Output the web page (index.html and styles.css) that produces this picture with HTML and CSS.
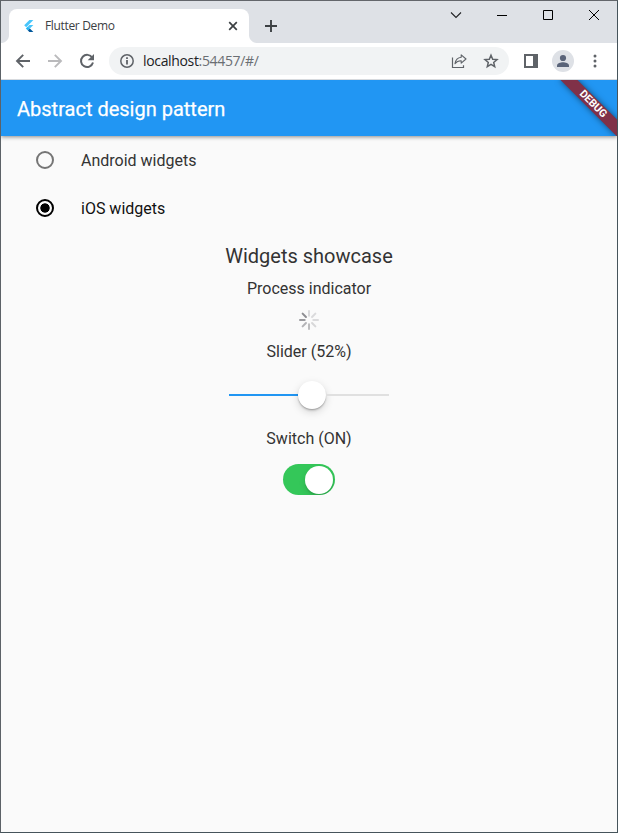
FILE: index.html
```html
<!DOCTYPE html>
<html lang="en">
<head>
<meta charset="utf-8">
<title>Flutter Demo</title>
<link rel="stylesheet" href="styles.css">
</head>
<body>
<div class="window">
  <header class="tabstrip">
    <div class="tab">
      <svg class="favicon" width="16" height="16" viewBox="0 0 16 16"><path d="M8.400 2h4L5.200 9.200l-2-2z" fill="#47c5fb"/><path d="M8.400 7h4l-3.500 3.500-2-2z" fill="#47c5fb"/><path d="M4.900 10.500l2-2 2 2-2 2z" fill="#22b6f6"/><path d="M6.900 12.500l2-2 3.500 3.500h-4z" fill="#01579b"/></svg>
      <span class="tab-title">Flutter Demo</span>
      <svg class="tab-close" width="10" height="10" viewBox="0 0 10 10"><path d="M1.2 1.2l7.6 7.6M8.8 1.2L1.2 8.8" stroke="#3c4043" stroke-width="1.7"/></svg>
    </div>
    <svg class="new-tab" width="12" height="12" viewBox="0 0 12 12"><path d="M6 0v12M0 6h12" stroke="#3c4043" stroke-width="1.9"/></svg>
    <div class="caption">
      <svg width="46" height="28" viewBox="0 0 46 28"><path d="M18 11.500l5 5 5-5" fill="none" stroke="#202124" stroke-width="1.1"/></svg>
      <svg width="46" height="28" viewBox="0 0 46 28"><path d="M18 14.5h10" stroke="#000"/></svg>
      <svg width="46" height="28" viewBox="0 0 46 28"><path d="M18.5 9.5h9v9h-9z" fill="none" stroke="#000"/></svg>
      <svg width="46" height="28" viewBox="0 0 46 28"><path d="M18 9l10 10M28 9L18 19" stroke="#000"/></svg>
    </div>
  </header>
  <nav class="toolbar">
    <svg width="16" height="16" viewBox="0 0 16 16"><path d="M15 8H2.2M8.2 1.8L2 8l6.2 6.2" fill="none" stroke="#5f6368" stroke-width="1.9"/></svg>
    <svg width="16" height="16" viewBox="0 0 16 16"><path d="M1 8h12.8M7.8 1.8L14 8l-6.2 6.2" fill="none" stroke="#bababc" stroke-width="1.9"/></svg>
    <svg width="16" height="16" viewBox="0 0 16 16"><path d="M13.3 4.7A6.1 6.1 0 1 0 14 9.6" fill="none" stroke="#5f6368" stroke-width="2"/><path d="M15 .9v6.3H8.7z" fill="#5f6368"/></svg>
    <div class="omnibox">
      <svg width="14" height="14" viewBox="0 0 14 14"><circle cx="7" cy="7" r="6.2" fill="none" stroke="#5f6368" stroke-width="1.5"/><path d="M7 6v4.6M7 3.3v1.6" stroke="#5f6368" stroke-width="1.8"/></svg>
      <span class="url"><b>localhost</b>:54457/#/</span>
      <svg class="share" width="16" height="16" viewBox="0 0 16 16"><path d="M1.5 4.5v10h11v-2.2" fill="none" stroke="#5f6368" stroke-width="1.2"/><path d="M10.2 1.8L15 6l-4.8 4.2V7.8C7.5 7.7 5.600 8.600 4 10.700c.5-3.500 2.700-6 6.200-6.400z" fill="none" stroke="#5f6368" stroke-width="1.1" stroke-linejoin="round"/></svg>
      <svg width="16" height="16" viewBox="0 0 16 16"><path d="M8 2.200l1.700 4 4.300.4-3.300 2.800 1 4.200L8 11.400l-3.700 2.200 1-4.200L2 6.600l4.300-.4z" fill="none" stroke="#5f6368" stroke-width="1.5"/></svg>
    </div>
    <svg class="panel" width="14" height="14" viewBox="0 0 14 14"><path fill-rule="evenodd" d="M0 0h14v14H0zM2 2v10h7V2z" fill="#5f6368"/></svg>
    <svg class="avatar" width="22" height="22" viewBox="0 0 22 22"><circle cx="11" cy="11" r="11" fill="#dee1e6"/><circle cx="11" cy="8" r="3.100" fill="#5a6479"/><path d="M5 17v-1.600c0-2 3.700-3.200 6-3.200s6 1.200 6 3.200V17z" fill="#5a6479"/></svg>
    <svg class="more" width="4" height="14" viewBox="0 0 4 14"><g fill="#5f6368"><circle cx="2" cy="2" r="1.500"/><circle cx="2" cy="7" r="1.500"/><circle cx="2" cy="12" r="1.500"/></g></svg>
  </nav>
  <main class="page">
    <h1 class="appbar">Abstract design pattern</h1>
    <div class="option"><span class="radio"></span><span class="label">Android widgets</span></div>
    <div class="option selected"><span class="radio"></span><span class="label">iOS widgets</span></div>
    <section class="showcase">
      <h2>Widgets showcase</h2>
      <p class="process">Process indicator</p>
      <svg class="spinner" width="20" height="20" viewBox="-10 -10 20 20" stroke-width="2" stroke-linecap="round"><g stroke="#3c3c44"><path d="M0-4.300V-9" opacity=".16"/><path d="M0-4.300V-9" opacity=".16" transform="rotate(45)"/><path d="M0-4.300V-9" opacity=".16" transform="rotate(90)"/><path d="M0-4.300V-9" opacity=".18" transform="rotate(135)"/><path d="M0-4.300V-9" opacity=".32" transform="rotate(180)"/><path d="M0-4.300V-9" opacity=".37" transform="rotate(225)"/><path d="M0-4.300V-9" opacity=".5" transform="rotate(270)"/><path d="M0-4.300V-9" opacity=".57" transform="rotate(315)"/></g></svg>
      <p class="slider-label">Slider (52%)</p>
      <div class="slider"><span class="done"></span><span class="thumb"></span><span class="rest"></span></div>
      <p class="switch-label">Switch (ON)</p>
      <div class="switch"><span class="knob"></span></div>
    </section>
    <div class="debug-corner"><div class="debug">DEBUG</div></div>
  </main>
</div>
</body>
</html>
```
FILE: styles.css
```css
* { box-sizing: border-box; }
body { margin: 0; }
h1, h2, p { margin: 0; font-weight: 400; }
svg { display: block; flex: none; }
.window {
  display: flex;
  flex-direction: column;
  width: 618px;
  height: 833px;
  border: 1px solid;
  border-color: #63666b #46545b #46545b #5c6267;
  background: #fff;
}
.tabstrip {
  display: flex;
  height: 42px;
  padding-left: 8px;
  background: #dee1e6;
}
.tab {
  position: relative;
  display: flex;
  align-items: center;
  width: 240px;
  height: 34px;
  margin-top: 8px;
  padding: 0 11px 0 12px;
  border-radius: 8px 8px 0 0;
  background: #fff;
}
.tab::before, .tab::after {
  content: "";
  position: absolute;
  bottom: 0;
  width: 8px;
  height: 8px;
}
.tab::before { left: -8px; background: radial-gradient(circle at 0 0, #dee1e6 7.500px, #fff 8.500px); }
.tab::after { right: -8px; background: radial-gradient(circle at 100% 0, #dee1e6 7.500px, #fff 8.500px); }
.tab-title {
  margin-left: 8px;
  font: 12px/16px "Open Sans", sans-serif;
  letter-spacing: -0.34px;
  color: #3c4043;
}
.tab-close { margin-left: auto; }
.new-tab { margin: 19px 0 0 16px; }
.caption { display: flex; margin-left: auto; }
.toolbar {
  display: flex;
  align-items: center;
  height: 37px;
  padding-left: 14px;
  gap: 16px;
  border-bottom: 1px solid #d7dade;
}
.omnibox {
  display: flex;
  align-items: center;
  width: 400px;
  height: 28px;
  margin-left: -2px;
  padding: 0 10px 0 11px;
  border-radius: 14px;
  background: #f1f3f4;
}
.url {
  margin-left: 9px;
  font: 14px/20px "Open Sans", sans-serif;
  letter-spacing: -0.34px;
  color: #6a6e73;
}
.url b { font-weight: 400; color: #202124; }
.share { margin: 0 16px 0 auto; }
.panel { margin-left: -1px; }
.avatar { margin-left: -2px; }
.more { margin-left: 3px; }
.page {
  position: relative;
  flex: 1;
  overflow: hidden;
  background: #fafafa;
  font: 16px/24px Roboto, sans-serif;
  color: #333;
}
.appbar {
  height: 56px;
  padding-left: 16px;
  background: #2196f3;
  box-shadow: 0 1px 4px rgba(0, 0, 0, .45);
  font-size: 20px;
  -webkit-text-stroke: 0.25px #fff;
  line-height: 58px;
  color: #fff;
}
.option {
  display: flex;
  align-items: center;
  height: 48px;
  padding-left: 35px;
  gap: 27px;
}
.label { padding-top: 2px; }
.radio {
  width: 18px;
  height: 18px;
  border: 2px solid #757575;
  border-radius: 50%;
}
.selected { color: #111; }
.selected .radio {
  border-color: #000;
  background: radial-gradient(circle, #000 4.300px, transparent 5px);
}
.showcase {
  display: flex;
  flex-direction: column;
  align-items: center;
  padding-top: 12px;
}
h2 { font-size: 20px; line-height: 24px; }
.process { margin-top: 9px; }
.spinner { margin-top: 9px; }
.slider-label { margin-top: 10px; }
.slider {
  display: flex;
  align-items: center;
  width: 160px;
  height: 28px;
  margin-top: 17px;
}
.done { width: 69px; height: 2px; background: #2196f3; }
.rest { flex: 1; height: 2px; background: #e0e0e0; }
.thumb {
  width: 28px;
  height: 28px;
  border-radius: 50%;
  background: #fff;
  box-shadow: 0 3px 8px rgba(0, 0, 0, .15), 0 1px 1px rgba(0, 0, 0, .16), 0 2px 2px rgba(0, 0, 0, .12);
}
.switch-label { margin-top: 18px; }
.switch {
  width: 52px;
  height: 31px;
  margin-top: 13px;
  padding: 1.500px 2px 0 22px;
  border-radius: 16px;
  background: #34c759;
  overflow: hidden;
}
.knob {
  display: block;
  width: 28px;
  height: 28px;
  border-radius: 50%;
  background: #fff;
  box-shadow: 0 3px 6px rgba(0, 0, 0, .12), 0 2px 1px rgba(0, 0, 0, .08);
}
.debug-corner {
  position: absolute;
  top: 0;
  right: 0;
  width: 70px;
  height: 56px;
  overflow: hidden;
}
.debug {
  position: absolute;
  top: 18px;
  left: 6px;
  width: 80px;
  height: 12px;
  transform: rotate(45deg);
  background: rgb(128, 49, 72);
  box-shadow: 0 0 6px rgba(0, 0, 0, .5);
  font: 700 10.600px/12.500px Roboto, sans-serif;
  text-align: center;
  color: #fff;
}
```
